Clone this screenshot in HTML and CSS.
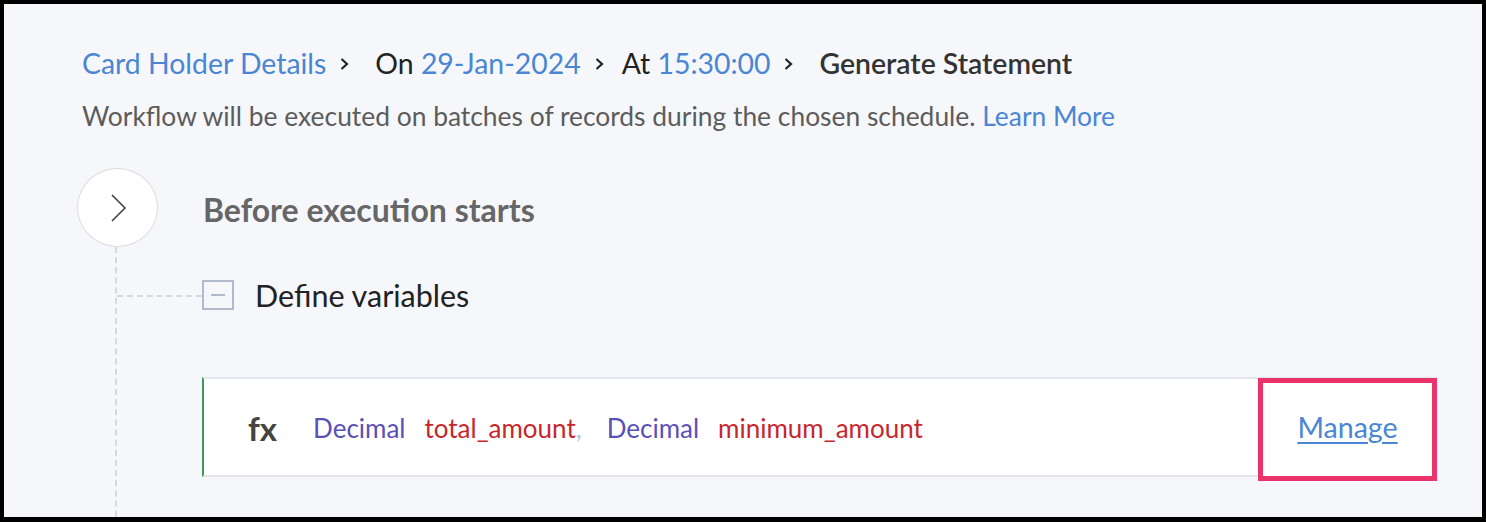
FILE: index.html
```html
<!DOCTYPE html>
<html lang="en">
<head>
  <meta charset="UTF-8" />
  <title>Generate Statement</title>
  <link rel="stylesheet" href="styles.css">
</head>
<body>
  <div class="frame">
    <div class="crumbs">
      <a class="link" href="#">Card Holder Details</a>
      <svg class="sep" width="9" height="12" viewBox="0 0 9 12"><path d="M1.5 1 L7 6 L1.5 11" fill="none" stroke="#222" stroke-width="2.2"/></svg>
      <span>On <a class="link" href="#">29-Jan-2024</a></span>
      <svg class="sep tight" width="9" height="12" viewBox="0 0 9 12"><path d="M1.5 1 L7 6 L1.5 11" fill="none" stroke="#222" stroke-width="2.2"/></svg>
      <span>At <a class="link" href="#">15:30:00</a></span>
      <svg class="sep" width="9" height="12" viewBox="0 0 9 12"><path d="M1.5 1 L7 6 L1.5 11" fill="none" stroke="#222" stroke-width="2.2"/></svg>
      <span class="current">Generate Statement</span>
    </div>
    <p class="desc">Workflow will be executed on batches of records during the chosen schedule. <a class="link" href="#">Learn More</a></p>

    <div class="stage">
      <div class="stage-head">
        <div class="node">
          <svg width="20" height="30" viewBox="0 0 20 30"><path d="M3 2 L16 15 L3 28" fill="none" stroke="#444" stroke-width="1.6"/></svg>
        </div>
        <h3>Before execution starts</h3>
      </div>
      <div class="stage-body">
        <div class="step">
          <span class="toggle"></span>
          <span class="step-title">Define variables</span>
        </div>
        <div class="vars">
          <span class="fx">fx</span>
          <span class="type">Decimal</span>
          <span class="name">total_amount</span><span class="comma">,</span>
          <span class="type">Decimal</span>
          <span class="name">minimum_amount</span>
          <div class="manage"><a href="#">Manage</a></div>
        </div>
      </div>
    </div>
  </div>
</body>
</html>
```

FILE: styles.css
```css
html, body {
  margin: 0;
  height: 100%;
}
body {
  background: #000;
  font-family: Lato, "Open Sans", sans-serif;
  overflow: hidden;
}
.frame {
  margin: 4px;
  height: 513px;
  background: #f6f7fb;
  padding: 41px 0 0 78px;
  box-sizing: border-box;
  overflow: hidden;
}
.link {
  color: #4a86d4;
  text-decoration: none;
}
.crumbs {
  display: flex;
  align-items: center;
  font-size: 28.4px;
  line-height: 36px;
  color: #222;
  height: 36px;
}
.crumbs .sep {
  margin: 2px 26px 0 14px;
}
.crumbs .sep.tight {
  margin-right: 18px;
}
.crumbs .current {
  font-weight: 600;
  color: #333;
}
.desc {
  margin: 19px 0 0;
  font-size: 26.4px;
  line-height: 32px;
  color: #5c5c5c;
}
.stage {
  margin-top: 36px;
  margin-left: -5px;
}
.stage-head {
  display: flex;
  align-items: center;
  gap: 45px;
}
.node {
  width: 77px;
  height: 77px;
  border: 1px solid #dcdcdc;
  border-radius: 50%;
  background: #fff;
  display: flex;
  align-items: center;
  justify-content: center;
  padding-left: 2px;
  box-sizing: content-box;
}
.stage-head h3 {
  margin: 5px 0 0;
  font-size: 32px;
  line-height: 40px;
  font-weight: 700;
  color: #666;
}
.stage-body {
  margin-left: 38px;
  border-left: 2px dashed #d6d8dc;
  padding: 30px 0 60px 85px;
}
.step {
  position: relative;
  display: flex;
  align-items: center;
  gap: 21px;
  height: 36px;
}
.step::before {
  content: "";
  position: absolute;
  left: -85px;
  width: 85px;
  top: 18px;
  border-top: 2px dashed #d6d8dc;
}
.toggle {
  position: relative;
  width: 28px;
  height: 26px;
  border: 2px solid #b3b9cc;
  background: #f6f7fb;
}
.toggle::after {
  content: "";
  position: absolute;
  left: 7px;
  width: 14px;
  top: 12px;
  border-top: 2px solid #b3b9cc;
}
.step-title {
  font-size: 30.5px;
  line-height: 36px;
  color: #222;
}
.vars {
  position: relative;
  margin-top: 64px;
  width: 1235px;
  height: 100px;
  display: flex;
  align-items: center;
  background: #fff;
  border-top: 2px solid #e3e6ea;
  border-bottom: 2px solid #e3e6ea;
  border-left: 2px solid #3c9a5c;
  box-sizing: border-box;
  padding: 2px 0 0 44px;
  font-size: 26px;
}
.fx {
  font-size: 33px;
  font-weight: 700;
  color: #444;
  margin-right: 36px;
}
.type {
  color: #5b50b8;
  margin-right: 19px;
}
.name {
  color: #c8262c;
}
.comma {
  color: #a9c8ec;
  margin-right: 25px;
}
.manage {
  position: absolute;
  right: 0;
  top: -1px;
  width: 179px;
  height: 103px;
  border: 5px solid #ea336a;
  box-sizing: border-box;
  background: #fff;
  display: flex;
  align-items: center;
  justify-content: center;
  padding-bottom: 5px;
}
.manage a {
  color: #4a86d4;
  font-size: 28.6px;
  text-decoration: underline;
  text-underline-offset: 4px;
}
```
